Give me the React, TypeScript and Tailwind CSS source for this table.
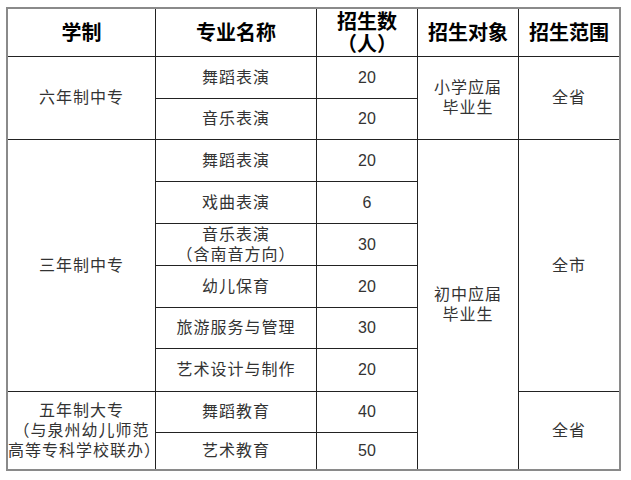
import React from "react";

const font = { fontFamily: '"Liberation Sans", "Noto Sans CJK SC", sans-serif' };

type CellProps = {
  c: string;
  children: React.ReactNode;
  head?: boolean;
};

function Cell({ c, children, head }: CellProps) {
  return (
    <div
      className={
        "bg-white flex items-center justify-center text-center " +
        (head
          ? "text-[20px] font-bold text-black leading-[22px] "
          : "text-[16px] text-[#333] leading-[20px] tracking-[1px] ") +
        c
      }
    >
      <div>{children}</div>
    </div>
  );
}

function Num({ c, children }: { c: string; children: React.ReactNode }) {
  return (
    <div className={"bg-white flex items-center justify-center text-[16px] text-[#333] " + c}>
      {children}
    </div>
  );
}

export default function App() {
  return (
    <div className="w-[631px] h-[480px] bg-white pt-[7px] pl-[6px]" style={font}>
      <div className="w-[615px] h-[464px] border-2 border-[#8a8a8a] bg-[#222] grid gap-px grid-cols-[147px_160px_100px_100px_100px] grid-rows-[47px_41px_40px_41px_41px_41px_41px_40px_42px_40px_36px]">
        <Cell head c="col-start-1 row-start-1">学制</Cell>
        <Cell head c="col-start-2 row-start-1">专业名称</Cell>
        <Cell head c="col-start-3 row-start-1">
          招生数
          <br />
          （人）
        </Cell>
        <Cell head c="col-start-4 row-start-1">招生对象</Cell>
        <Cell head c="col-start-5 row-start-1">招生范围</Cell>

        <Cell c="col-start-1 row-start-2 row-span-2">六年制中专</Cell>
        <Cell c="col-start-2 row-start-2">舞蹈表演</Cell>
        <Num c="col-start-3 row-start-2">20</Num>
        <Cell c="col-start-2 row-start-3">音乐表演</Cell>
        <Num c="col-start-3 row-start-3">20</Num>
        <Cell c="col-start-4 row-start-2 row-span-2">
          小学应届
          <br />
          毕业生
        </Cell>
        <Cell c="col-start-5 row-start-2 row-span-2">全省</Cell>

        <Cell c="col-start-1 row-start-4 row-span-6">三年制中专</Cell>
        <Cell c="col-start-2 row-start-4">舞蹈表演</Cell>
        <Num c="col-start-3 row-start-4">20</Num>
        <Cell c="col-start-2 row-start-5">戏曲表演</Cell>
        <Num c="col-start-3 row-start-5">6</Num>
        <Cell c="col-start-2 row-start-6">
          音乐表演
          <br />
          （含南音方向）
        </Cell>
        <Num c="col-start-3 row-start-6">30</Num>
        <Cell c="col-start-2 row-start-7">幼儿保育</Cell>
        <Num c="col-start-3 row-start-7">20</Num>
        <Cell c="col-start-2 row-start-8">旅游服务与管理</Cell>
        <Num c="col-start-3 row-start-8">30</Num>
        <Cell c="col-start-2 row-start-9">艺术设计与制作</Cell>
        <Num c="col-start-3 row-start-9">20</Num>
        <Cell c="col-start-4 row-start-4 row-span-8">
          初中应届
          <br />
          毕业生
        </Cell>
        <Cell c="col-start-5 row-start-4 row-span-6">全市</Cell>

        <Cell c="col-start-1 row-start-10 row-span-2">
          五年制大专
          <br />
          （与泉州幼儿师范
          <br />
          高等专科学校联办）
        </Cell>
        <Cell c="col-start-2 row-start-10">舞蹈教育</Cell>
        <Num c="col-start-3 row-start-10">40</Num>
        <Cell c="col-start-2 row-start-11">艺术教育</Cell>
        <Num c="col-start-3 row-start-11">50</Num>
        <Cell c="col-start-5 row-start-10 row-span-2">全省</Cell>
      </div>
    </div>
  );
}
